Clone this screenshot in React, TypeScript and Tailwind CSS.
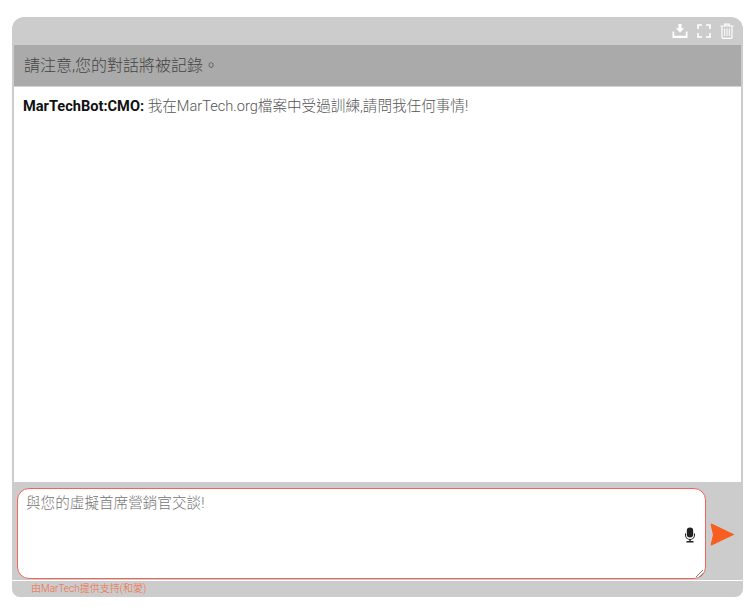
const font = "font-['Roboto','Noto_Sans_CJK_TC',sans-serif]";

function DownloadIcon() {
  return (
    <svg width="16" height="14" viewBox="0 0 16 14" fill="white">
      <path d="M6.4 0h3.2v4.2h2.6L8 8.8 3.8 4.2h2.6z" />
      <path d="M0.5 7.5h1.7v4.3h11.6V7.5h1.7V14H0.5z" />
    </svg>
  );
}

function FullscreenIcon() {
  return (
    <svg width="14" height="14" viewBox="0 0 14 14" fill="none" stroke="white" strokeWidth="1.6">
      <path d="M1 5V1h4M9 1h4v4M13 9v4H9M5 13H1V9" />
    </svg>
  );
}

function TrashIcon() {
  return (
    <svg width="14" height="16" viewBox="0 0 14 16" fill="none" stroke="white">
      <path strokeWidth="1.2" d="M0.5 3h13M4.8 3V1.2h4.4V3" />
      <path strokeWidth="1.2" d="M2 3.2v11a1.2 1.2 0 0 0 1.2 1.2h7.6a1.2 1.2 0 0 0 1.2-1.2v-11" />
      <path strokeWidth="1" d="M4.7 5.5v7.5M7 5.5v7.5M9.3 5.5v7.5" />
    </svg>
  );
}

function MicIcon() {
  return (
    <svg width="12" height="16" viewBox="0 0 12 16" fill="#222">
      <rect x="2.8" y="0.5" width="6.4" height="10" rx="3.2" />
      <path d="M1 6.5v1.5a5 5 0 0 0 10 0V6.5h-1v1.5a4 4 0 0 1-8 0V6.5z" />
      <rect x="5.3" y="12" width="1.4" height="2.4" />
      <rect x="2.5" y="14" width="7" height="1.5" />
    </svg>
  );
}

function SendIcon() {
  return (
    <svg width="25" height="23" viewBox="0 0 25 23">
      <path d="M1.5 0.5 L24.5 11.5 L1.5 22.5 Q0.5 22.5 0.7 21 L3 12 L0.7 2 Q0.5 0.5 1.5 0.5 Z" fill="#f95d1f" />
    </svg>
  );
}

function ResizeGrip() {
  return (
    <svg className="absolute bottom-0 right-[1px]" width="9" height="9" viewBox="0 0 9 9" stroke="#555" strokeWidth="0.8">
      <path d="M1 8 L8 1 M4.5 8 L8 4.5" />
    </svg>
  );
}

export default function App() {
  return (
    <div className={`h-[610px] w-[755px] bg-white pl-3 pr-3 pt-[17px] ${font}`}>
      <div className="flex h-[580px] w-[731px] flex-col overflow-hidden rounded-t-xl rounded-b-lg bg-[#cccccc]">
        <div className="flex h-7 shrink-0 items-center justify-end gap-[9px] pr-[9px]">
          <DownloadIcon />
          <FullscreenIcon />
          <TrashIcon />
        </div>
        <div className="mx-[2px] flex h-[42px] shrink-0 items-center border-b border-[#d4d4d4] bg-[#aaaaaa] pl-[10px] pt-[1px] text-base font-light text-[#444444]">
          請注意,您的對話將被記錄。
        </div>
        <div className="mx-[2px] h-[395px] shrink-0 bg-white px-[9px] pt-[9px] text-[14.6px] leading-[20px] font-light text-[#555555]">
          <span className="font-bold text-[#111111]">MarTechBot:CMO:</span> 我在MarTech.org檔案中受過訓練,請問我任何事情!
        </div>
        <div className="flex h-[98px] shrink-0 items-start pl-[5px] pt-[6px]">
          <div className="relative h-[91px] w-[689px] rounded-xl border border-[#f0645a] bg-white px-2 py-1 text-[14.6px] leading-[20px] font-light text-[#757575]">
            與您的虛擬首席營銷官交談!
            <div className="absolute right-[9px] top-[38px]">
              <MicIcon />
            </div>
            <ResizeGrip />
          </div>
          <div className="ml-[4px] mt-[35px]">
            <SendIcon />
          </div>
        </div>
        <div className="h-px shrink-0 bg-white" />
        <div className="flex-1 pl-[19px] text-[10px] leading-[16px] font-light text-[#f4683c]">
          由MarTech提供支持(和愛)
        </div>
      </div>
    </div>
  );
}
